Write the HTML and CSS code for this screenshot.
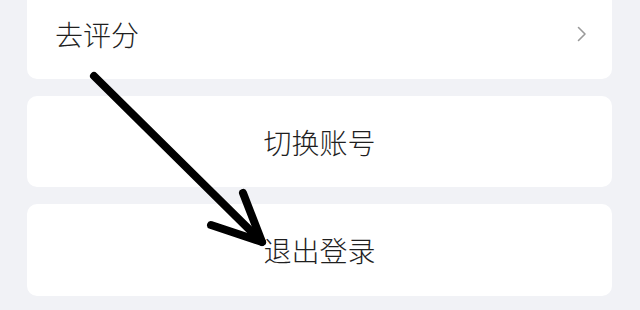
FILE: index.html
```html
<!DOCTYPE html>
<html lang="zh-CN">
<head>
    <meta charset="UTF-8">
    <meta name="viewport" content="width=device-width, initial-scale=1.0">
    <title>设置</title>
    <link rel="stylesheet" href="styles.css">
</head>
<body>
    <div class="container">
        <div class="card row">
            <span class="label">去评分</span>
            <svg class="chevron" width="10" height="16" viewBox="0 0 10 16">
                <path d="M1.5 1.5 L8 8 L1.5 14.5" fill="none" stroke="#9a9a9a" stroke-width="1.6" stroke-linecap="round" stroke-linejoin="round"/>
            </svg>
        </div>
        <div class="card center">
            <span class="label">切换账号</span>
        </div>
        <div class="card center">
            <span class="label">退出登录</span>
        </div>
    </div>

    <!-- hand-drawn arrow on top of the screenshot -->
    <svg class="arrow" width="640" height="310" viewBox="0 0 640 310">
        <g fill="none" stroke="#000" stroke-width="8" stroke-linecap="round" stroke-linejoin="round">
            <path d="M94 76 L262 242"/>
            <path d="M243 193 L262 242 L211 225"/>
        </g>
    </svg>
</body>
</html>
```

FILE: styles.css
```css
body {
    margin: 0;
    padding: 0;
    background: #f1f2f6;
    font-family: 'Noto Sans CJK SC', 'Noto Sans', sans-serif;
    color: #1f1f1f;
    overflow: hidden;
}
.container {
    display: flex;
    flex-direction: column;
    gap: 17px;
    margin: -12px 28px 0 27px;
}
.card {
    height: 91px;
    background: #fff;
    border-radius: 10px;
    display: flex;
    align-items: center;
}
.card.row {
    justify-content: space-between;
    padding: 0 25px 0 28px;
}
.card.center {
    justify-content: center;
}
.card:last-child {
    height: 92px;
}
.label {
    font-size: 28px;
    font-weight: 300;
    line-height: 1;
}
.chevron {
    display: block;
}
.arrow {
    position: absolute;
    left: 0;
    top: 0;
    pointer-events: none;
}
```
